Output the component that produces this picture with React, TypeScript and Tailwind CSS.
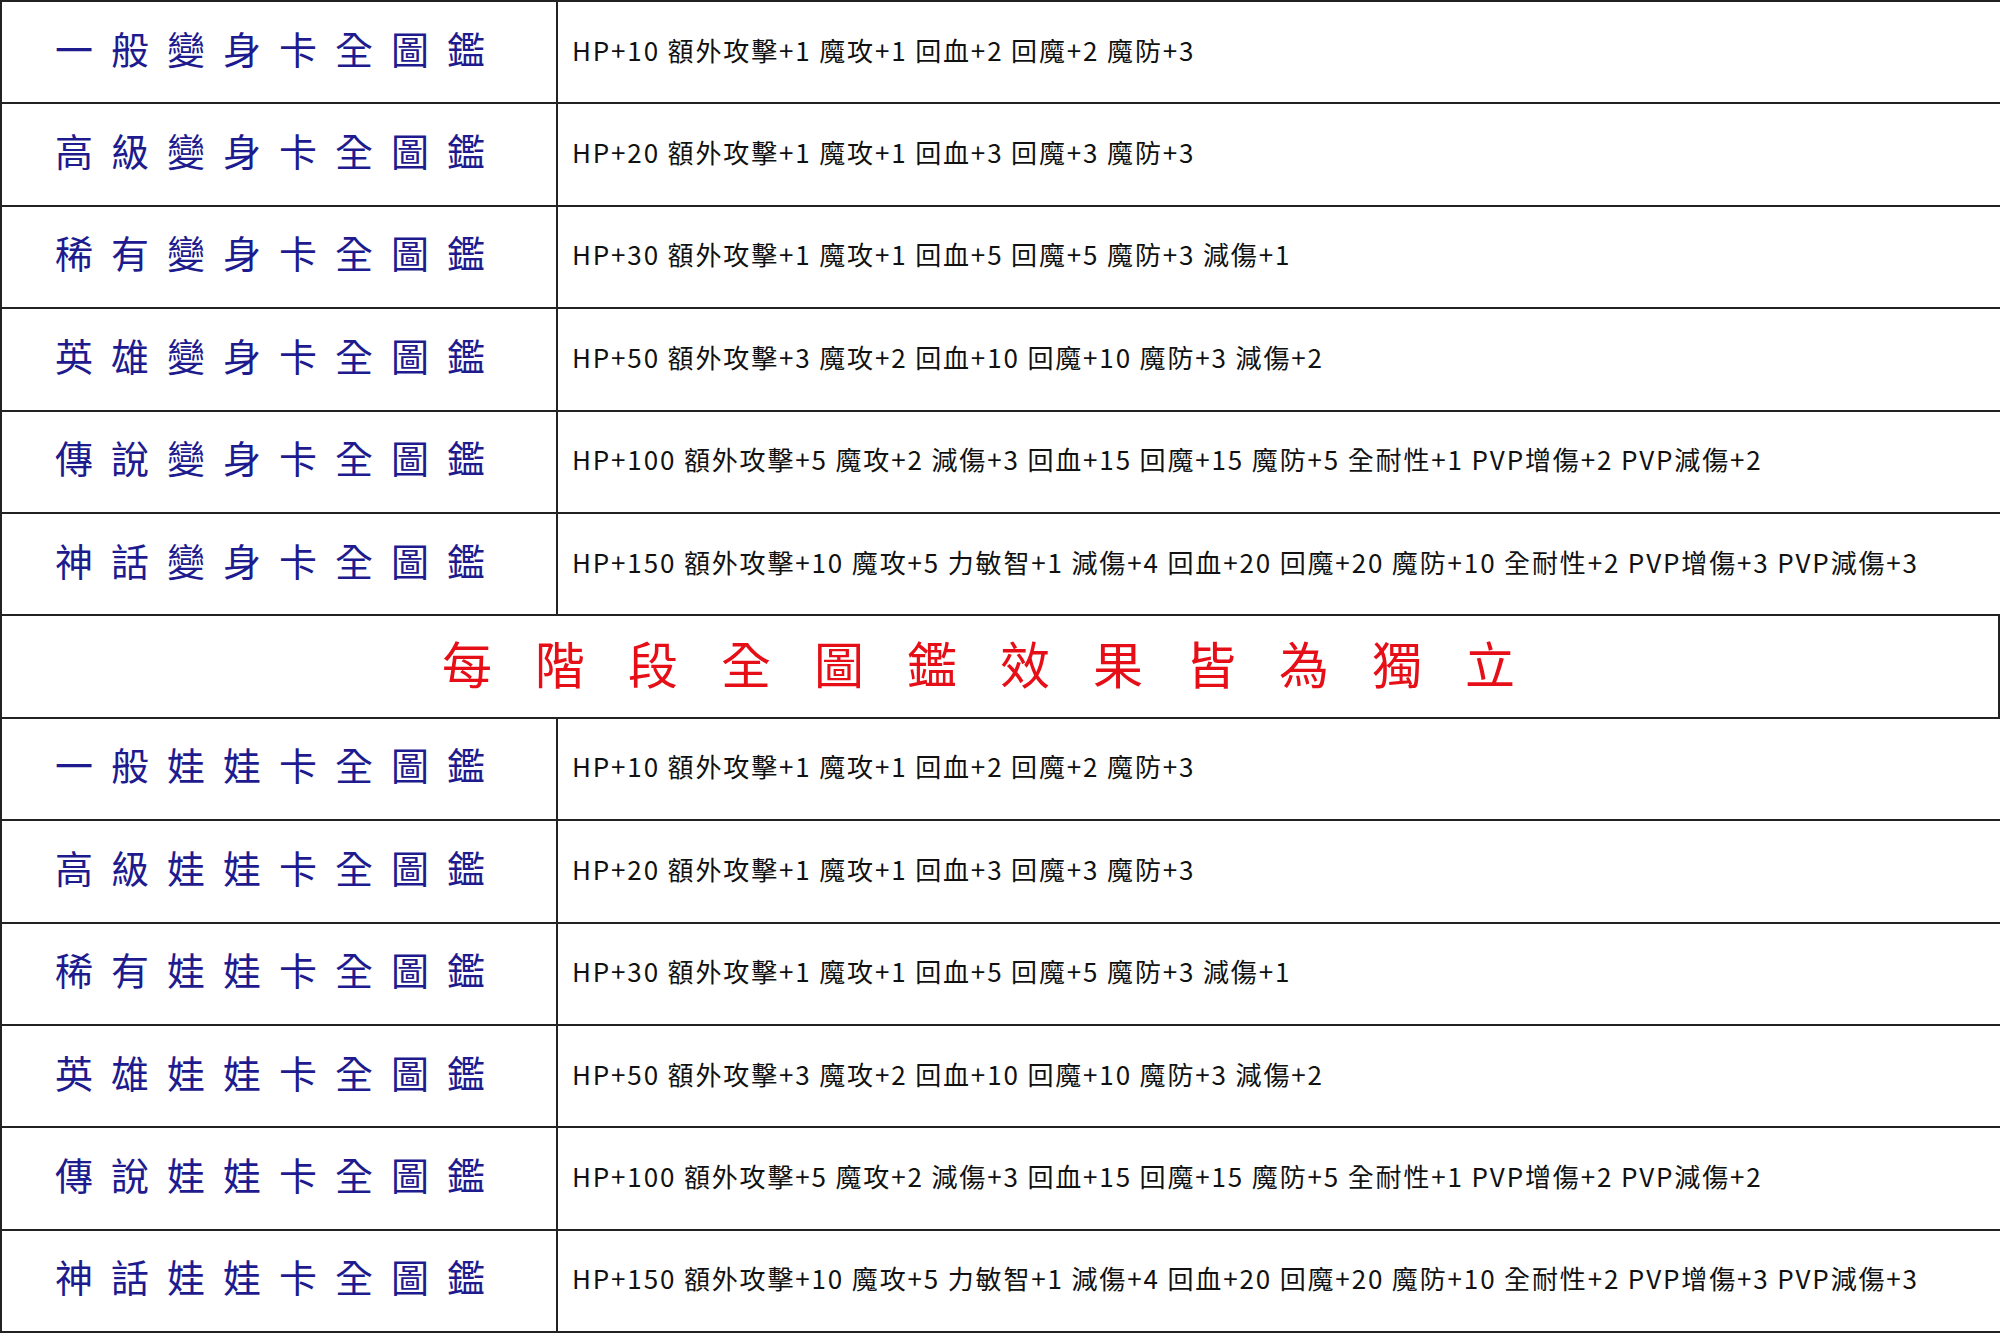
const cjk = "font-['Noto_Sans_CJK_TC','Noto_Sans_CJK_JP',sans-serif]";

type Row = { name: string; effect: string };

const tiers = ["一般", "高級", "稀有", "英雄", "傳說", "神話"];

const effects = [
  "HP+10 額外攻擊+1 魔攻+1 回血+2 回魔+2 魔防+3",
  "HP+20 額外攻擊+1 魔攻+1 回血+3 回魔+3 魔防+3",
  "HP+30 額外攻擊+1 魔攻+1 回血+5 回魔+5 魔防+3 減傷+1",
  "HP+50 額外攻擊+3 魔攻+2 回血+10 回魔+10 魔防+3 減傷+2",
  "HP+100 額外攻擊+5 魔攻+2 減傷+3 回血+15 回魔+15 魔防+5 全耐性+1 PVP增傷+2 PVP減傷+2",
  "HP+150 額外攻擊+10 魔攻+5 力敏智+1 減傷+4 回血+20 回魔+20 魔防+10 全耐性+2 PVP增傷+3 PVP減傷+3",
];

const buildRows = (kind: string): Row[] =>
  tiers.map((t, i) => ({ name: `${t}${kind}卡全圖鑑`, effect: effects[i] }));

const poly = buildRows("變身");
const doll = buildRows("娃娃");

function TableRow({ row }: { row: Row }) {
  return (
    <div className="flex min-h-0 flex-1 border-b-2 border-[#222]">
      <div className="flex w-[556px] shrink-0 items-center justify-center border-r-2 border-[#222]">
        <span className={`${cjk} -mt-[9px] text-[38px] leading-none tracking-[18px] text-[#1e1b8f]`}>
          {row.name}
        </span>
      </div>
      <div className="flex flex-1 items-center pl-[14px]">
        <span className={`${cjk} -mt-[5px] whitespace-nowrap text-[26px] leading-none tracking-[1.85px] text-[#111]`}>
          {row.effect}
        </span>
      </div>
    </div>
  );
}

export default function App() {
  return (
    <div className="h-[1333px] w-[2000px] overflow-hidden bg-white">
      <div className="flex h-full w-full flex-col border-t-2 border-l-2 border-[#222]">
        {poly.map((r) => (
          <TableRow key={r.name} row={r} />
        ))}
        <div className="flex min-h-0 flex-1 items-center justify-center border-r-2 border-b-2 border-[#222]">
          <span className={`${cjk} -mt-[10px] text-[50px] leading-none tracking-[43px] text-[#e60f17]`}>
            每階段全圖鑑效果皆為獨立
          </span>
        </div>
        {doll.map((r) => (
          <TableRow key={r.name} row={r} />
        ))}
      </div>
    </div>
  );
}
